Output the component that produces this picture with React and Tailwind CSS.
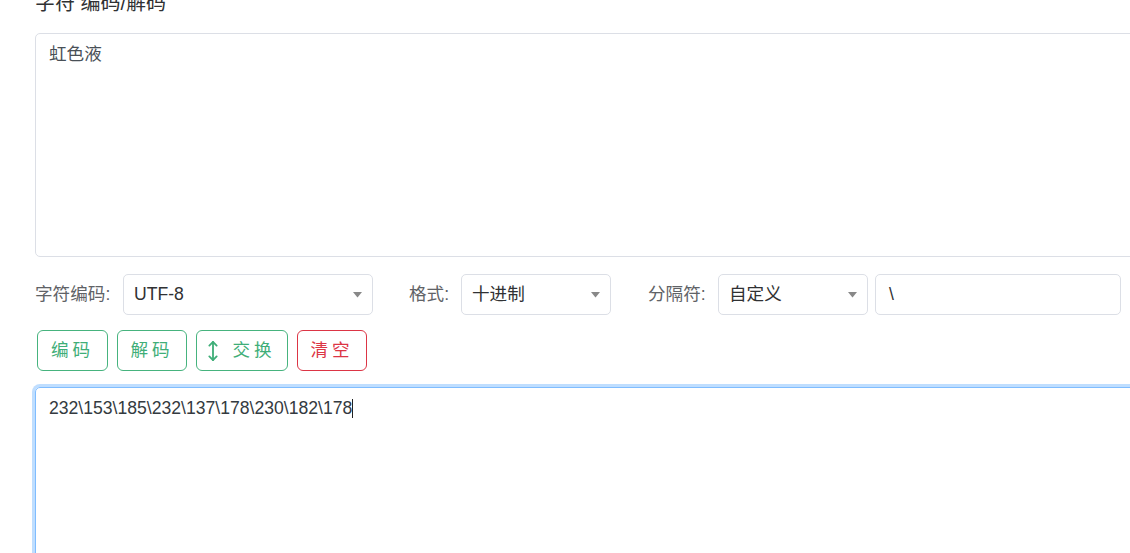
import React from "react";

const FONT = { fontFamily: '"Liberation Sans", "Noto Sans CJK SC", sans-serif' };

function Caret() {
  return (
    <svg width="9" height="6" viewBox="0 0 9 6" className="absolute right-[10px] top-1/2 -translate-y-1/2">
      <path d="M0 0 H9 L4.5 5.5 Z" fill="#888" />
    </svg>
  );
}

function Select({ w, value }) {
  return (
    <div className={`relative ${w} h-[41px] border border-[#dcdfe6] rounded-[5px] bg-white flex items-center pl-[10px] text-[17.6px] text-[#303133]`}>
      {value}
      <Caret />
    </div>
  );
}

function Btn({ w, color, children }) {
  return (
    <div
      className={`${w} h-[41px] rounded-[6px] border flex items-center justify-center text-[17.6px] tracking-[4px] ${color}`}
    >
      {children}
    </div>
  );
}

export default function App() {
  return (
    <div className="w-[1130px] h-[553px] overflow-hidden bg-white" style={FONT}>
      <div className="pl-[35px] w-[1200px]">
        <div className="-mt-[11px] h-[28px] leading-[28px] text-[20px] text-[#303133]">字符 编码/解码</div>
        <div className="mt-[16px] w-[1100px] h-[224px] border border-[#dcdfe6] rounded-[5px] px-[13px] py-[6.6px] text-[17.6px] leading-[26.4px] text-[#495057]">
          虹色液
        </div>
        <div className="mt-[17px] flex items-center h-[41px]">
          <div className="w-[88px] text-[17.6px] text-[#606266]">字符编码:</div>
          <Select w="w-[250px]" value="UTF-8" />
          <div className="ml-[36px] w-[52px] text-[17.6px] text-[#606266]">格式:</div>
          <Select w="w-[150px]" value="十进制" />
          <div className="ml-[37px] w-[70px] text-[17.6px] text-[#606266]">分隔符:</div>
          <Select w="w-[150px]" value="自定义" />
          <div className="ml-[7px] w-[246px] h-[41px] -mt-[1px] border border-[#dcdfe6] rounded-[5px] flex items-center pl-[13px] text-[17.6px] text-[#303133]">
            \
          </div>
        </div>
        <div className="mt-[15px] ml-[2px] flex gap-[9px]">
          <Btn w="w-[71px]" color="border-[#46b37e] text-[#3fae78]">编码</Btn>
          <Btn w="w-[70px]" color="border-[#46b37e] text-[#3fae78]">解码</Btn>
          <Btn w="w-[92px]" color="border-[#46b37e] text-[#3fae78]">
            <svg width="10" height="20" viewBox="8 1 8 22" fill="none" stroke="currentColor" strokeWidth="2" strokeLinecap="round" strokeLinejoin="round" className="mr-[14px]">
              <path d="M12 2v20" />
              <path d="m8 18 4 4 4-4" />
              <path d="m8 6 4-4 4 4" />
            </svg>
            交换
          </Btn>
          <Btn w="w-[70px]" color="border-[#dc3545] text-[#dc3545]">清空</Btn>
        </div>
        <div className="mt-[16px] w-[1100px] h-[300px] border border-[#80bdff] rounded-[5px] shadow-[0_0_0_3px_rgba(0,123,255,0.25)] px-[13px] py-[6.6px] text-[17.6px] leading-[26.4px] text-[#343a40]">
          232\153\185\232\137\178\230\182\178
          <span className="inline-block w-[1px] h-[19px] bg-[#222] align-[-4px]" />
        </div>
      </div>
    </div>
  );
}
